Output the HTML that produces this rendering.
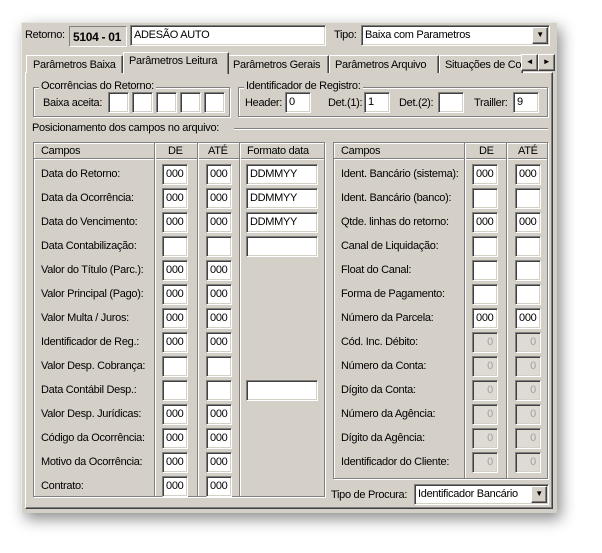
<!DOCTYPE html>
<html><head><meta charset="utf-8">
<style>
*{box-sizing:border-box;margin:0;padding:0}
body{width:602px;height:553px;background:#fff;position:relative;overflow:hidden;font-family:"Liberation Sans",sans-serif;font-size:11px;color:#000;letter-spacing:-0.3px}
.a{position:absolute}
.win{left:21px;top:22px;width:536px;height:491px;background:#d4d0c8;box-shadow:4px 6px 14px rgba(0,0,0,.45);border-top:1px solid #e8e6e0;border-left:1px solid #e8e6e0}
.in{position:absolute;background:#fff;border-top:1px solid #808080;border-left:1px solid #808080;border-bottom:1px solid #fff;border-right:1px solid #fff;box-shadow:inset 1px 1px 0 #404040,inset -1px -1px 0 #d4d0c8;padding:3px 0 0 3px;font-size:11px;line-height:13px;white-space:nowrap;overflow:hidden}
.dis{background:#dedbd5;color:#a0a0a0;text-align:right;padding-right:4px}
.lbl{position:absolute;white-space:nowrap}
.grp{position:absolute;border:1px solid #808080;box-shadow:inset 1px 1px 0 #fff,1px 1px 0 #fff}
.gt{position:absolute;background:#d4d0c8;padding:0 2px;white-space:nowrap}
.tab{position:absolute;top:55px;height:18px;border:1px solid #fff;border-bottom:none;border-right:1px solid #404040;box-shadow:inset -1px 0 0 #808080;padding:3px 0 0 6px;white-space:nowrap;background:#d4d0c8;overflow:hidden}
.vl{position:absolute;width:2px;border-left:1px solid #808080;border-right:1px solid #fff}
.hl{position:absolute;height:2px;border-top:1px solid #808080;border-bottom:1px solid #fff}
.btn{position:absolute;background:#d4d0c8;border-top:1px solid #fff;border-left:1px solid #fff;border-right:1px solid #404040;border-bottom:1px solid #404040;box-shadow:inset -1px -1px 0 #808080;font-size:8px;text-align:center;line-height:14px}
</style></head><body>
<div class="a win"></div>
<div class="lbl" style="left:25px;top:29px">Retorno:</div>
<div class="a" style="left:69px;top:26px;width:58px;height:21px;border:1px solid #808080;border-right-color:#fff;border-bottom-color:#fff;font-weight:bold;font-size:12px;padding:3px 0 0 3px">5104 - 01</div>
<div class="in" style="left:130px;top:25px;width:196px;height:21px">ADESÃO AUTO</div>
<div class="lbl" style="left:334px;top:29px">Tipo:</div>
<div class="in" style="left:361px;top:25px;width:189px;height:21px">Baixa com Parametros</div>
<div class="btn" style="left:532px;top:27px;width:16px;height:17px">▼</div>

<div class="a" style="left:25px;top:72px;width:528px;height:437px;border-top:1px solid #fff;border-left:1px solid #fff;border-right:1px solid #404040;border-bottom:1px solid #404040;box-shadow:inset -1px -1px 0 #808080"></div>
<div class="tab" style="left:26px;width:97px">Parâmetros Baixa</div>
<div class="tab" style="left:228px;width:101px;padding-left:4px">Parâmetros Gerais</div>
<div class="tab" style="left:329px;width:110px;padding-left:5px">Parâmetros Arquivo</div>
<div class="tab" style="left:439px;width:84px;padding-left:5px">Situações de Co</div>
<div class="tab" style="left:123px;top:52px;height:22px;width:106px;padding:2px 0 0 5px;z-index:2">Parâmetros Leitura</div>
<div class="btn" style="left:521px;top:54px;width:17px;height:17px">◄</div>
<div class="btn" style="left:538px;top:54px;width:17px;height:17px">►</div>

<div class="grp" style="left:33px;top:87px;width:197px;height:30px"></div>
<div class="gt" style="left:39px;top:80px">Ocorrências do Retorno:</div>
<div class="lbl" style="left:43px;top:97px">Baixa aceita:</div>
<div class="in" style="left:108px;top:92px;width:21px;height:21px"></div>
<div class="in" style="left:132px;top:92px;width:21px;height:21px"></div>
<div class="in" style="left:156px;top:92px;width:21px;height:21px"></div>
<div class="in" style="left:180px;top:92px;width:21px;height:21px"></div>
<div class="in" style="left:204px;top:92px;width:21px;height:21px"></div>

<div class="grp" style="left:238px;top:87px;width:310px;height:30px"></div>
<div class="gt" style="left:244px;top:80px">Identificador de Registro:</div>
<div class="lbl" style="left:245px;top:97px">Header:</div>
<div class="in" style="left:285px;top:92px;width:26px;height:21px">0</div>
<div class="lbl" style="left:328px;top:97px">Det.(1):</div>
<div class="in" style="left:364px;top:92px;width:26px;height:21px">1</div>
<div class="lbl" style="left:399px;top:97px">Det.(2):</div>
<div class="in" style="left:438px;top:92px;width:26px;height:21px"></div>
<div class="lbl" style="left:474px;top:97px">Trailler:</div>
<div class="in" style="left:513px;top:92px;width:26px;height:21px">9</div>

<div class="lbl" style="left:32px;top:122px">Posicionamento dos campos no arquivo:</div>
<div class="hl" style="left:234px;top:128px;width:314px"></div>

<div class="grp" style="left:33px;top:142px;width:292px;height:355px"></div>
<div class="hl" style="left:34px;top:158px;width:290px"></div>
<div class="vl" style="left:154px;top:143px;height:353px"></div>
<div class="vl" style="left:197px;top:143px;height:353px"></div>
<div class="vl" style="left:239px;top:143px;height:353px"></div>
<div class="lbl" style="left:41px;top:145px">Campos</div>
<div class="lbl" style="left:168px;top:145px">DE</div>
<div class="lbl" style="left:208px;top:145px">ATÉ</div>
<div class="lbl" style="left:247px;top:145px">Formato data</div>

<div class="lbl" style="left:41px;top:168px">Data do Retorno:</div>
<div class="lbl" style="left:41px;top:192px">Data da Ocorrência:</div>
<div class="lbl" style="left:41px;top:216px">Data do Vencimento:</div>
<div class="lbl" style="left:41px;top:240px">Data Contabilização:</div>
<div class="lbl" style="left:41px;top:264px">Valor do Título (Parc.):</div>
<div class="lbl" style="left:41px;top:288px">Valor Principal (Pago):</div>
<div class="lbl" style="left:41px;top:312px">Valor Multa / Juros:</div>
<div class="lbl" style="left:41px;top:336px">Identificador de Reg.:</div>
<div class="lbl" style="left:41px;top:360px">Valor Desp. Cobrança:</div>
<div class="lbl" style="left:41px;top:384px">Data Contábil Desp.:</div>
<div class="lbl" style="left:41px;top:408px">Valor Desp. Jurídicas:</div>
<div class="lbl" style="left:41px;top:432px">Código da Ocorrência:</div>
<div class="lbl" style="left:41px;top:456px">Motivo da Ocorrência:</div>
<div class="lbl" style="left:41px;top:480px">Contrato:</div>

<div class="in" style="left:162px;top:164px;width:26px;height:21px">000</div><div class="in" style="left:206px;top:164px;width:26px;height:21px">000</div><div class="in" style="left:246px;top:164px;width:72px;height:21px">DDMMYY</div>
<div class="in" style="left:162px;top:188px;width:26px;height:21px">000</div><div class="in" style="left:206px;top:188px;width:26px;height:21px">000</div><div class="in" style="left:246px;top:188px;width:72px;height:21px">DDMMYY</div>
<div class="in" style="left:162px;top:212px;width:26px;height:21px">000</div><div class="in" style="left:206px;top:212px;width:26px;height:21px">000</div><div class="in" style="left:246px;top:212px;width:72px;height:21px">DDMMYY</div>
<div class="in" style="left:162px;top:236px;width:26px;height:21px"></div><div class="in" style="left:206px;top:236px;width:26px;height:21px"></div><div class="in" style="left:246px;top:236px;width:72px;height:21px"></div>
<div class="in" style="left:162px;top:260px;width:26px;height:21px">000</div><div class="in" style="left:206px;top:260px;width:26px;height:21px">000</div>
<div class="in" style="left:162px;top:284px;width:26px;height:21px">000</div><div class="in" style="left:206px;top:284px;width:26px;height:21px">000</div>
<div class="in" style="left:162px;top:308px;width:26px;height:21px">000</div><div class="in" style="left:206px;top:308px;width:26px;height:21px">000</div>
<div class="in" style="left:162px;top:332px;width:26px;height:21px">000</div><div class="in" style="left:206px;top:332px;width:26px;height:21px">000</div>
<div class="in" style="left:162px;top:356px;width:26px;height:21px"></div><div class="in" style="left:206px;top:356px;width:26px;height:21px"></div>
<div class="in" style="left:162px;top:380px;width:26px;height:21px"></div><div class="in" style="left:206px;top:380px;width:26px;height:21px"></div><div class="in" style="left:246px;top:380px;width:72px;height:21px"></div>
<div class="in" style="left:162px;top:404px;width:26px;height:21px">000</div><div class="in" style="left:206px;top:404px;width:26px;height:21px">000</div>
<div class="in" style="left:162px;top:428px;width:26px;height:21px">000</div><div class="in" style="left:206px;top:428px;width:26px;height:21px">000</div>
<div class="in" style="left:162px;top:452px;width:26px;height:21px">000</div><div class="in" style="left:206px;top:452px;width:26px;height:21px">000</div>
<div class="in" style="left:162px;top:476px;width:26px;height:21px">000</div><div class="in" style="left:206px;top:476px;width:26px;height:21px">000</div>

<div class="grp" style="left:333px;top:142px;width:215px;height:337px"></div>
<div class="hl" style="left:334px;top:158px;width:213px"></div>
<div class="vl" style="left:464px;top:143px;height:335px"></div>
<div class="vl" style="left:506px;top:143px;height:335px"></div>
<div class="lbl" style="left:341px;top:145px">Campos</div>
<div class="lbl" style="left:479px;top:145px">DE</div>
<div class="lbl" style="left:518px;top:145px">ATÉ</div>

<div class="lbl" style="left:341px;top:168px">Ident. Bancário (sistema):</div>
<div class="lbl" style="left:341px;top:192px">Ident. Bancário (banco):</div>
<div class="lbl" style="left:341px;top:216px">Qtde. linhas do retorno:</div>
<div class="lbl" style="left:341px;top:240px">Canal de Liquidação:</div>
<div class="lbl" style="left:341px;top:264px">Float do Canal:</div>
<div class="lbl" style="left:341px;top:288px">Forma de Pagamento:</div>
<div class="lbl" style="left:341px;top:312px">Número da Parcela:</div>
<div class="lbl" style="left:341px;top:336px">Cód. Inc. Débito:</div>
<div class="lbl" style="left:341px;top:360px">Número da Conta:</div>
<div class="lbl" style="left:341px;top:384px">Dígito da Conta:</div>
<div class="lbl" style="left:341px;top:408px">Número da Agência:</div>
<div class="lbl" style="left:341px;top:432px">Dígito da Agência:</div>
<div class="lbl" style="left:341px;top:456px">Identificador do Cliente:</div>

<div class="in" style="left:472px;top:164px;width:26px;height:21px">000</div><div class="in" style="left:515px;top:164px;width:26px;height:21px">000</div>
<div class="in" style="left:472px;top:188px;width:26px;height:21px"></div><div class="in" style="left:515px;top:188px;width:26px;height:21px"></div>
<div class="in" style="left:472px;top:212px;width:26px;height:21px">000</div><div class="in" style="left:515px;top:212px;width:26px;height:21px">000</div>
<div class="in" style="left:472px;top:236px;width:26px;height:21px"></div><div class="in" style="left:515px;top:236px;width:26px;height:21px"></div>
<div class="in" style="left:472px;top:260px;width:26px;height:21px"></div><div class="in" style="left:515px;top:260px;width:26px;height:21px"></div>
<div class="in" style="left:472px;top:284px;width:26px;height:21px"></div><div class="in" style="left:515px;top:284px;width:26px;height:21px"></div>
<div class="in" style="left:472px;top:308px;width:26px;height:21px">000</div><div class="in" style="left:515px;top:308px;width:26px;height:21px">000</div>
<div class="in dis" style="left:472px;top:332px;width:26px;height:21px">0</div><div class="in dis" style="left:515px;top:332px;width:26px;height:21px">0</div>
<div class="in dis" style="left:472px;top:356px;width:26px;height:21px">0</div><div class="in dis" style="left:515px;top:356px;width:26px;height:21px">0</div>
<div class="in dis" style="left:472px;top:380px;width:26px;height:21px">0</div><div class="in dis" style="left:515px;top:380px;width:26px;height:21px">0</div>
<div class="in dis" style="left:472px;top:404px;width:26px;height:21px">0</div><div class="in dis" style="left:515px;top:404px;width:26px;height:21px">0</div>
<div class="in dis" style="left:472px;top:428px;width:26px;height:21px">0</div><div class="in dis" style="left:515px;top:428px;width:26px;height:21px">0</div>
<div class="in dis" style="left:472px;top:452px;width:26px;height:21px">0</div><div class="in dis" style="left:515px;top:452px;width:26px;height:21px">0</div>

<div class="lbl" style="left:331px;top:489px">Tipo de Procura:</div>
<div class="in" style="left:414px;top:484px;width:135px;height:21px">Identificador Bancário</div>
<div class="btn" style="left:531px;top:486px;width:16px;height:17px">▼</div>
</body></html>
